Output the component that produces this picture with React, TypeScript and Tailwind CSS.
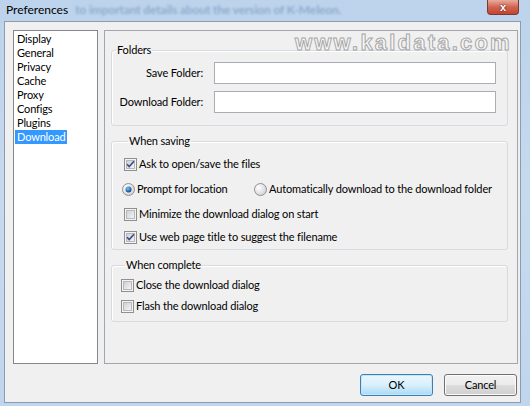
import React from "react";

function CheckBox({ checked }: { checked?: boolean }) {
  return (
    <svg width="13" height="13" viewBox="0 0 13 13" className="shrink-0">
      <defs>
        <linearGradient id="cbg" x1="0" y1="0" x2="1" y2="1">
          <stop offset="0" stopColor="#cbcfd5" />
          <stop offset="1" stopColor="#f6f6f6" />
        </linearGradient>
      </defs>
      <rect x="0.5" y="0.5" width="12" height="12" fill="#f4f4f4" stroke="#8f8f8f" />
      <rect x="2.5" y="2.5" width="8" height="8" fill="url(#cbg)" stroke="#b6b8bc" />
      {checked && (
        <path d="M3 6.2 L5.2 8.6 L10 3.2" fill="none" stroke="#3b4f86" strokeWidth="1.6" />
      )}
    </svg>
  );
}

function Radio({ checked }: { checked?: boolean }) {
  return (
    <svg width="13" height="13" viewBox="0 0 13 13" className="shrink-0">
      <defs>
        <radialGradient id="rbg" cx="0.35" cy="0.35" r="0.8">
          <stop offset="0" stopColor="#ffffff" />
          <stop offset="1" stopColor="#c9ccd1" />
        </radialGradient>
        <radialGradient id="rdot" cx="0.4" cy="0.35" r="0.7">
          <stop offset="0" stopColor="#8ac6f0" />
          <stop offset="0.6" stopColor="#2a72b8" />
          <stop offset="1" stopColor="#1b3f6e" />
        </radialGradient>
      </defs>
      <circle cx="6.5" cy="6.5" r="6" fill="url(#rbg)" stroke="#8f9196" />
      {checked && <circle cx="6.5" cy="6.5" r="3" fill="url(#rdot)" />}
    </svg>
  );
}

function Option({
  kind,
  checked,
  label,
}: {
  kind: "check" | "radio";
  checked?: boolean;
  label: string;
}) {
  return (
    <label className="flex items-center h-[16px] whitespace-nowrap">
      {kind === "check" ? <CheckBox checked={checked} /> : <Radio checked={checked} />}
      <span className="ml-[2px]">{label}</span>
    </label>
  );
}

function Group({
  title,
  className,
  children,
}: {
  title: string;
  className?: string;
  children: React.ReactNode;
}) {
  return (
    <fieldset
      className={
        "border border-[#d5dbe1] rounded-[3px] shadow-[inset_1px_1px_0_#ffffff] " +
        (className ?? "")
      }
    >
      <legend className="ml-[4px] px-[1px] leading-[16px]">{title}</legend>
      {children}
    </fieldset>
  );
}

const pages = ["Display", "General", "Privacy", "Cache", "Proxy", "Configs", "Plugins", "Download"];

export default function App() {
  return (
    <div className="w-[530px] h-[406px] overflow-hidden flex flex-col bg-gradient-to-b from-[#bcd3eb] via-[#c6daef] to-[#c0d6ee] font-['Lato',sans-serif] text-[11px] tracking-[-0.15px] text-black">
      {/* title bar */}
      <div className="h-[21px] shrink-0 flex items-start relative">
        <span className="ml-[6px] mt-[2px] text-[12px] leading-[16px] tracking-normal text-black">Preferences</span>
        <span className="ml-[7px] mt-[2px] text-[12px] leading-[16px] font-bold text-[#5f80ad] opacity-50 blur-[1.3px] whitespace-nowrap">
          to important details about the version of K-Meleon.
        </span>
        <div className="absolute left-[487px] top-0 w-[32px] h-[15px] rounded-b-[4px] border border-t-0 border-[#7a3a32] bg-gradient-to-b from-[#e8ab9e] via-[#d06451] to-[#c4442e] flex items-center justify-center">
          <span className="text-white font-bold text-[11px] leading-none font-['Liberation_Sans',sans-serif] [text-shadow:0_0_2px_#3a0e08]">
            x
          </span>
        </div>
      </div>

      {/* client area */}
      <div className="ml-[4px] mr-[9px] h-[382px] shrink-0 border border-[#8e9bab] bg-[#f0f0f0] flex flex-col pl-[8px] pr-[2px] pt-[8px]">
        <div className="flex gap-[6px] h-[334px]">
          {/* page list */}
          <div className="w-[85px] h-full border border-[#828790] bg-white pt-[1px] pl-[1px]">
            {pages.map((p) => (
              <div key={p} className="h-[14px] leading-[14px]">
                <span
                  className={
                    "inline-block px-[2px] " +
                    (p === "Download" ? "bg-[#3399ff] text-white" : "")
                  }
                >
                  {p}
                </span>
              </div>
            ))}
          </div>

          {/* settings page */}
          <div className="relative w-[414px] h-full border border-[#a3a7ad] pl-[6px] pr-[9px] pt-[11px] flex flex-col">
            <div className="absolute left-[190px] top-[1px] text-[22px] font-bold tracking-[2.2px] font-['Liberation_Sans',sans-serif] text-[#f7f7f7] [-webkit-text-stroke:1px_#a7a7a7] leading-[22px]">
              www.kaldata.com
            </div>

            <Group title="Folders" className="pb-[12px] pt-[4px]">
              <div className="grid grid-cols-[91px_282px] gap-x-[11px] gap-y-[7px] items-center">
                <span className="text-right">Save Folder:</span>
                <input className="h-[22px] bg-white border border-[#abadb3] border-t-[#a6acb5] outline-none" />
                <span className="text-right">Download Folder:</span>
                <input className="h-[22px] bg-white border border-[#abadb3] border-t-[#a6acb5] outline-none" />
              </div>
            </Group>

            <Group title="When saving" className="mt-[7px] pl-[12px] pt-[7px] pb-[4px]">
              <div className="flex flex-col">
                <Option kind="check" checked label="Ask to open/save the files" />
                <div className="flex items-center mt-[9px]">
                  <div className="w-[132px] -ml-[2px]">
                    <Option kind="radio" checked label="Prompt for location" />
                  </div>
                  <Option kind="radio" label="Automatically download to the download folder" />
                </div>
                <div className="mt-[9px]">
                  <Option kind="check" label="Minimize the download dialog on start" />
                </div>
                <div className="mt-[7px]">
                  <Option kind="check" checked label="Use web page title to suggest the filename" />
                </div>
              </div>
            </Group>

            <Group title="When complete" className="mt-[7px] pl-[9px] pt-[4px] pb-[7px]">
              <div className="flex flex-col gap-[5px]">
                <Option kind="check" label="Close the download dialog" />
                <Option kind="check" label="Flash the download dialog" />
              </div>
            </Group>
          </div>
        </div>

        {/* buttons */}
        <div className="flex justify-end gap-[11px] mt-[10px] pr-[1px]">
          <button className="w-[73px] h-[22px] rounded-[3px] border border-[#3c7fb1] bg-gradient-to-b from-[#eaf6fd] via-[#d9f0fc] to-[#a7d9f5] shadow-[inset_0_0_0_1px_#c5e6f8]">
            OK
          </button>
          <button className="w-[73px] h-[22px] rounded-[3px] border border-[#707070] bg-[linear-gradient(to_bottom,#f2f2f2_0%,#ebebeb_50%,#dddddd_50%,#cfcfcf_100%)] shadow-[inset_0_0_0_1px_#fcfcfc]">
            Cancel
          </button>
        </div>
      </div>
    </div>
  );
}
